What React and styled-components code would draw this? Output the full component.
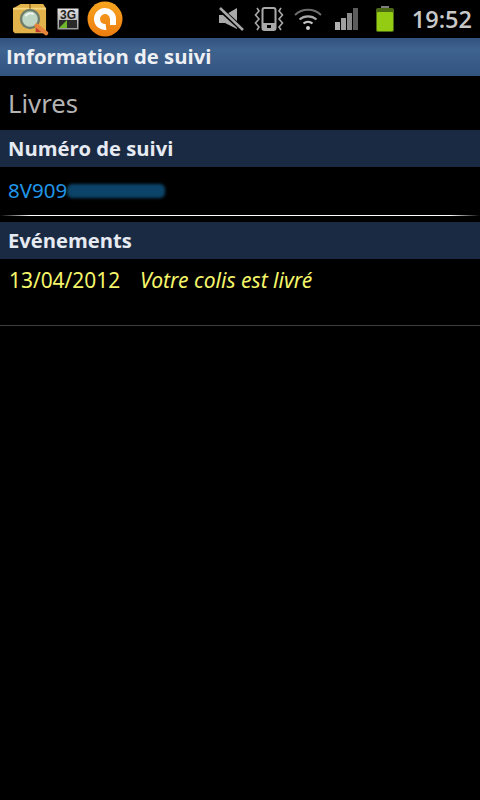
import React from 'react';
import styled, { createGlobalStyle } from 'styled-components';

const GlobalStyle = createGlobalStyle`
  html, body {
    margin: 0;
    padding: 0;
    background: #000000;
  }
  body {
    font-family: "Noto Sans", "Open Sans", sans-serif;
  }
`;

const Page = styled.div`
  width: 480px;
  height: 800px;
  background: #000000;
  overflow: hidden;
`;

const StatusBar = styled.div`
  height: 38px;
  display: flex;
  align-items: center;
  justify-content: space-between;
  background: #000000;
`;

const StatusGroup = styled.div`
  display: flex;
  align-items: center;
`;

const NotifIcons = styled(StatusGroup)`
  padding-left: 11px;
  gap: 8px;
`;

const SystemIcons = styled(StatusGroup)`
  padding-right: 8px;
`;

const IconSlot = styled.span`
  display: flex;
  margin-left: ${(props) => props.$gap}px;
`;

const Clock = styled.span`
  font-family: "Open Sans", "Noto Sans", sans-serif;
  font-size: 23.5px;
  font-weight: 600;
  color: #c8c8c8;
  margin-left: 18px;
  line-height: 38px;
`;

const TitleBar = styled.div`
  height: 38px;
  box-sizing: border-box;
  padding: 0 0 2px 6px;
  display: flex;
  align-items: center;
  background: linear-gradient(#32527f, #3f638f 30%, #32547f);
  color: #eef0f4;
  font-size: 20.3px;
  font-weight: 700;
  font-family: "Open Sans", "Noto Sans", sans-serif;
`;

const Name = styled.div`
  height: 54px;
  display: flex;
  align-items: center;
  padding-left: 8px;
  font-size: 25.7px;
  color: #b4b4b4;
`;

const SectionHeader = styled.div`
  height: 37px;
  box-sizing: border-box;
  padding: 0 0 2px 8px;
  display: flex;
  align-items: center;
  background: #1b2a43;
  color: #e6eaf2;
  font-size: 20.2px;
  font-weight: 700;
  font-family: "Open Sans", "Noto Sans", sans-serif;
`;

const TrackingRow = styled.div`
  height: 48px;
  box-sizing: border-box;
  padding: 0 0 2px 8px;
  display: flex;
  align-items: center;
  font-size: 20.5px;
  color: #2196e8;
`;

const Redacted = styled.span`
  width: 98px;
  height: 14px;
  margin-top: 1px;
  background: #0b4468;
  border-radius: 5px;
  filter: blur(1.5px);
`;

const GlowDivider = styled.div`
  height: 1px;
  margin-bottom: 6px;
  background: linear-gradient(90deg, #000000 0, #ffffff 30px, #ffffff 450px, #000000 480px);
`;

const EventRow = styled.div`
  height: 67px;
  display: flex;
  align-items: baseline;
  padding: 6px 0 0 9px;
  box-sizing: border-box;
  font-size: 20.9px;
  color: #f5f56a;
  border-bottom: 1px solid #3e3e3e;
`;

const EventDate = styled.span`
  width: 131px;
`;

const EventLabel = styled.span`
  font-style: italic;
  font-size: 21.1px;
`;

const ParcelIcon = () => (
  <svg width="38" height="34" viewBox="0 0 40 36">
    <path d="M2 7 L10 2 H34 L37 7 V31 L34 33 H4 L2 31 Z" fill="#e2b34a" />
    <path d="M2 7 H37" stroke="#f5d77f" strokeWidth="2" />
    <path d="M20 2 V7" stroke="#a97a25" strokeWidth="2" />
    <rect x="26" y="27" width="6" height="5" fill="#c03a30" />
    <circle cx="20" cy="18" r="9.5" fill="#bfd6c4" stroke="#6f7d6a" strokeWidth="2.5" />
    <path d="M15 15 A7 7 0 0 1 24 13" stroke="#eef6ee" strokeWidth="2" fill="none" />
    <path d="M27 25 L37 33" stroke="#e8853d" strokeWidth="4.5" strokeLinecap="round" />
  </svg>
);

const ThreeGIcon = () => (
  <svg width="22" height="22" viewBox="0 0 22 22">
    <defs>
      <linearGradient id="tag" x1="0" y1="0" x2="0" y2="1">
        <stop offset="0" stopColor="#e4e4e4" />
        <stop offset="1" stopColor="#9a9a9a" />
      </linearGradient>
    </defs>
    <rect x="0.5" y="0.5" width="21" height="21" fill="url(#tag)" />
    <rect x="2" y="12" width="18" height="8" fill="#2a2a2a" />
    <path d="M2 20 L10 12 V20 Z" fill="#6fb52c" />
    <text x="11" y="10.5" textAnchor="middle" fontSize="12" fontWeight="700" fontFamily="Liberation Sans, sans-serif" fill="#222222">3G</text>
  </svg>
);

const OrangeAppIcon = () => (
  <svg width="36" height="36" viewBox="0 0 36 36">
    <defs>
      <linearGradient id="disc" x1="0" y1="0" x2="0" y2="1">
        <stop offset="0" stopColor="#f8a51f" />
        <stop offset="1" stopColor="#ec7c10" />
      </linearGradient>
    </defs>
    <circle cx="18" cy="18" r="17.5" fill="url(#disc)" />
    <path d="M19 26 A8 8 0 1 1 26 18 V24" fill="none" stroke="#ffffff" strokeWidth="6" />
  </svg>
);

const MuteIcon = () => (
  <svg width="26" height="24" viewBox="0 0 26 24">
    <path d="M1 8 H7 L19 1 V22 L7 16 H1 Z" fill="#a9a9a9" />
    <path d="M1 1 L25 23" stroke="#000000" strokeWidth="5" />
    <path d="M2 1 L25 23" stroke="#a9a9a9" strokeWidth="2.5" />
  </svg>
);

const VibrateIcon = () => (
  <svg width="30" height="24" viewBox="0 0 30 24">
    <rect x="8.5" y="1" width="13" height="22" rx="2" fill="none" stroke="#a9a9a9" strokeWidth="2" />
    <rect x="9" y="16" width="12" height="7" fill="#a9a9a9" />
    <rect x="13" y="18" width="4" height="3" fill="#000000" />
    <path d="M3 1 L5 4 L1.5 8 L5 12 L1.5 16 L5 20 L3 23" fill="none" stroke="#a9a9a9" strokeWidth="1.6" />
    <path d="M27 1 L25 4 L28.5 8 L25 12 L28.5 16 L25 20 L27 23" fill="none" stroke="#a9a9a9" strokeWidth="1.6" />
  </svg>
);

const WifiIcon = () => (
  <svg width="28" height="24" viewBox="0 0 28 24">
    <path d="M1 8 A19 19 0 0 1 27 8" fill="none" stroke="#6e6e6e" strokeWidth="2" />
    <path d="M5.5 12.5 A13 13 0 0 1 22.5 12.5" fill="none" stroke="#a9a9a9" strokeWidth="2.2" />
    <path d="M9.5 16.5 A7 7 0 0 1 18.5 16.5" fill="none" stroke="#c4c4c4" strokeWidth="2.2" />
    <circle cx="14" cy="21" r="2" fill="#d0d0d0" />
  </svg>
);

const SignalIcon = () => (
  <svg width="24" height="22" viewBox="0 0 24 22">
    <rect x="0" y="14" width="5" height="8" fill="#b0b0b0" />
    <rect x="6" y="10" width="5" height="12" fill="#a0a0a0" />
    <rect x="12" y="5" width="5" height="17" fill="#8a8a8a" />
    <rect x="18" y="0" width="5" height="22" fill="#5c5c5c" />
  </svg>
);

const BatteryIcon = () => (
  <svg width="18" height="26" viewBox="0 0 18 26">
    <rect x="5" y="0" width="8" height="3" fill="#7d7d7d" />
    <rect x="0" y="2" width="18" height="24" rx="2" fill="#4d6b14" />
    <rect x="1" y="6" width="16" height="19" rx="1" fill="#93cc12" />
  </svg>
);

export default function App() {
  return (
    <Page>
      <GlobalStyle />
      <StatusBar>
        <NotifIcons>
          <ParcelIcon />
          <ThreeGIcon />
          <OrangeAppIcon />
        </NotifIcons>
        <SystemIcons>
          <IconSlot $gap={0}><MuteIcon /></IconSlot>
          <IconSlot $gap={10}><VibrateIcon /></IconSlot>
          <IconSlot $gap={10}><WifiIcon /></IconSlot>
          <IconSlot $gap={13}><SignalIcon /></IconSlot>
          <IconSlot $gap={17}><BatteryIcon /></IconSlot>
          <Clock>19:52</Clock>
        </SystemIcons>
      </StatusBar>
      <TitleBar>Information de suivi</TitleBar>
      <Name>Livres</Name>
      <SectionHeader>Numéro de suivi</SectionHeader>
      <TrackingRow>
        8V909
        <Redacted />
      </TrackingRow>
      <GlowDivider />
      <SectionHeader>Evénements</SectionHeader>
      <EventRow>
        <EventDate>13/04/2012</EventDate>
        <EventLabel>Votre colis est livré</EventLabel>
      </EventRow>
    </Page>
  );
}
